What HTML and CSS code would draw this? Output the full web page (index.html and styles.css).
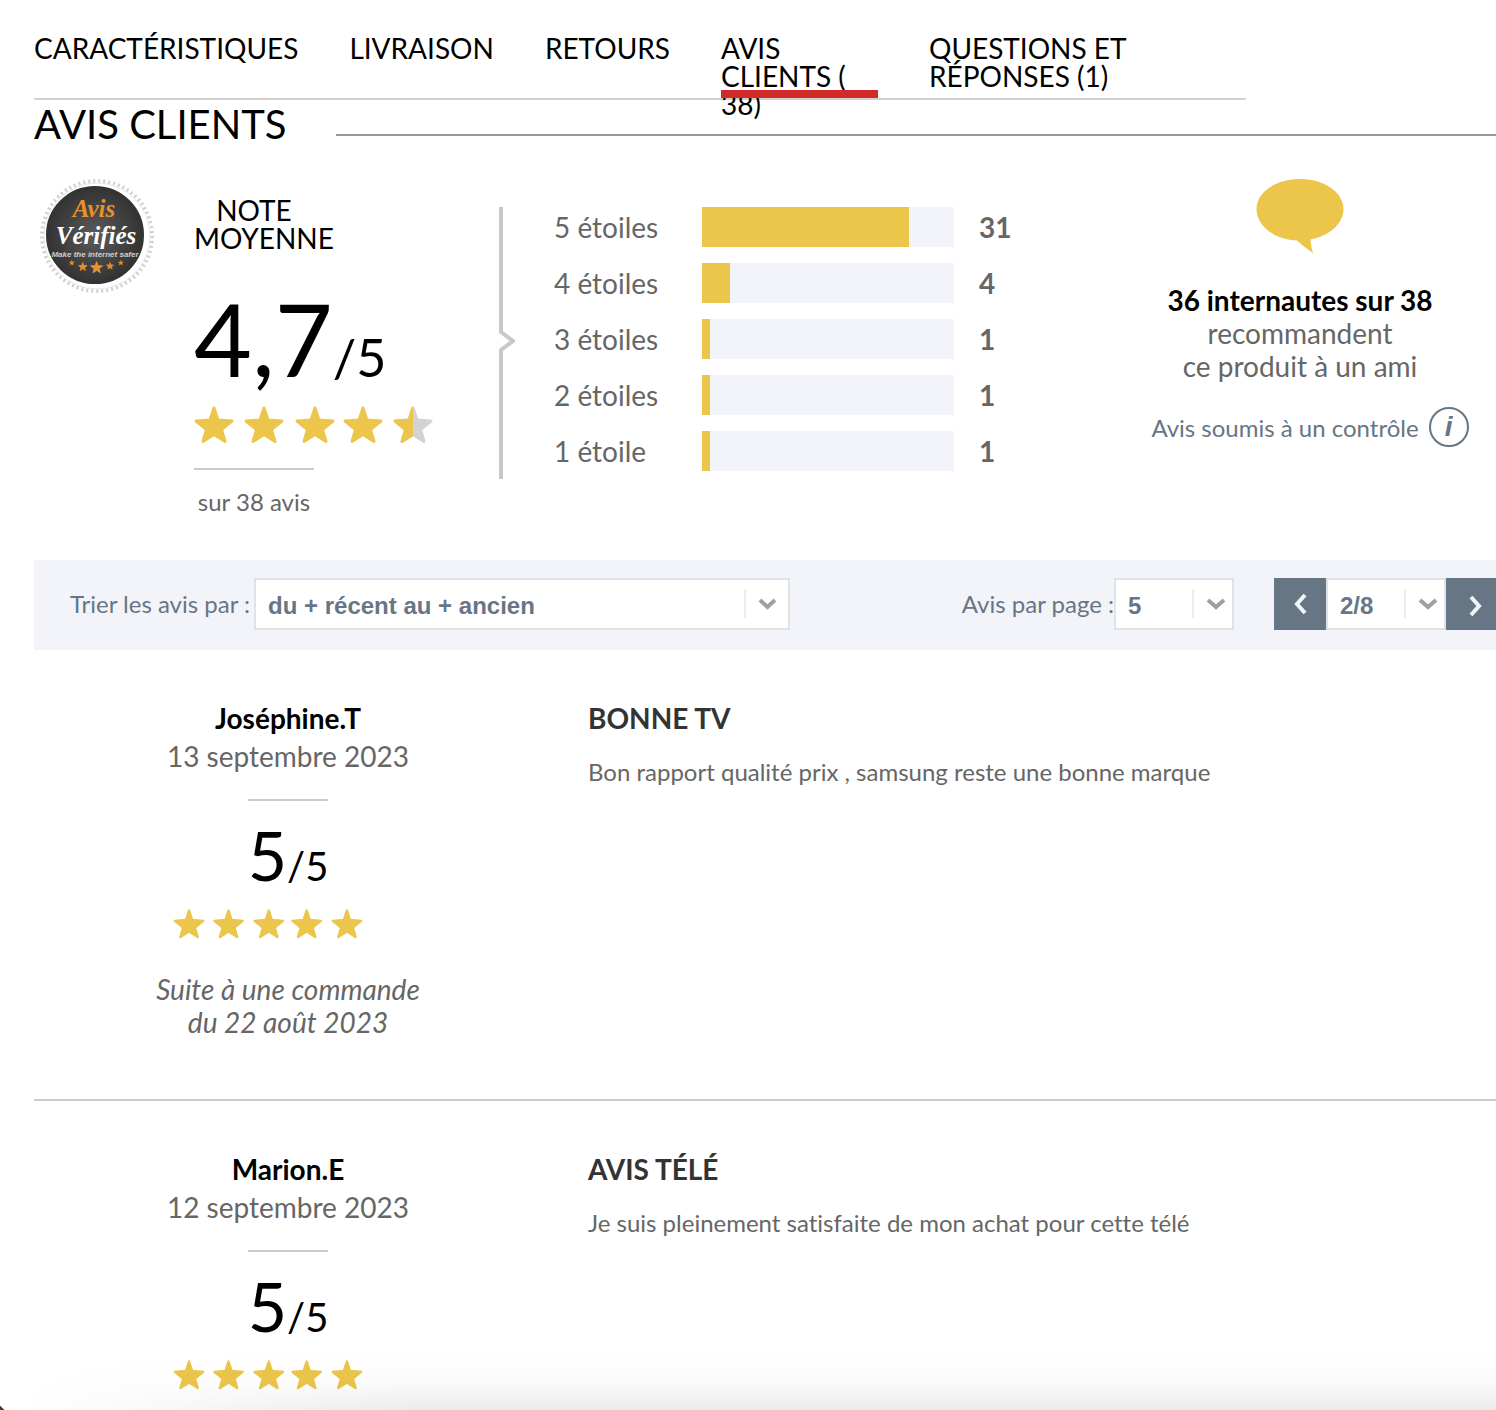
FILE: index.html
```html
<!DOCTYPE html>
<html lang="fr">
<head>
<meta charset="utf-8">
<meta name="viewport" content="width=device-width, initial-scale=1">
<title>Avis clients</title>
<link rel="stylesheet" href="styles.css">
</head>
<body>
<svg class="defs" width="0" height="0" aria-hidden="true">
  <defs>
    <path id="star" stroke-width="3" stroke-linejoin="round" d="M20 2 24 14 38 15 27.500 23.500 31 35.500 20 28.500 9 35.500 12.500 23.500 2 15 16 14Z"/>
    <clipPath id="left-half"><path d="M0 0H20V38H0Z"/></clipPath>
    <g id="five-stars">
      <use href="#star"/><use href="#star" x="50"/><use href="#star" x="101"/><use href="#star" x="149"/><use href="#star" x="200"/>
    </g>
  </defs>
</svg>
<nav class="tabs">
  <a href="#caracteristiques">CARACTÉRISTIQUES</a>
  <a href="#livraison">LIVRAISON</a>
  <a href="#retours">RETOURS</a>
  <a href="#avis" class="active">AVIS CLIENTS ( 38)</a>
  <a href="#questions" class="questions">QUESTIONS ET RÉPONSES (1)</a>
</nav>
<main id="avis">
  <h1 class="title">AVIS CLIENTS</h1>

  <section class="summary">
    <div class="seal">
      <svg width="114" height="116" viewBox="0 0 114 116" role="img" aria-label="Avis Vérifiés">
        <defs>
          <radialGradient id="disc"><stop offset="0" stop-color="#5b5b5b"/><stop offset="1" stop-color="#333"/></radialGradient>
        </defs>
        <circle cx="57" cy="58" r="55" fill="none" stroke="#d0d0d0" stroke-width="4" stroke-dasharray="2 3"/>
        <circle cx="57" cy="58" r="53" fill="#fff" stroke="#e8e8e8"/>
        <circle cx="55" cy="57" r="48" fill="url(#disc)" stroke="#333" stroke-width="2"/>
        <g text-anchor="middle" font-weight="bold" font-style="italic">
          <text class="seal-text" x="54" y="39" font-size="25" fill="#e8912c">Avis</text>
          <text class="seal-text" x="56" y="66" font-size="25" fill="#fff">Vérifiés</text>
          <text class="seal-note" x="55" y="79" font-size="8" fill="#d0d0d0">Make the internet safer</text>
        </g>
        <g fill="#e8912c" stroke="#e8912c">
          <use href="#star" transform="translate(29 82) scale(.14)"/>
          <use href="#star" transform="translate(38 84) scale(.24)"/>
          <use href="#star" transform="translate(50 83) scale(.33)"/>
          <use href="#star" transform="translate(66 84) scale(.2)"/>
          <use href="#star" transform="translate(78 82) scale(.14)"/>
        </g>
      </svg>
    </div>

    <div class="average">
      <h2>NOTE MOYENNE</h2>
      <p class="score">4,7<span>/5</span></p>
      <svg class="stars" width="240" height="38" viewBox="0 0 240 38" role="img" aria-label="4,7 étoiles sur 5">
        <g class="gold"><use href="#star"/><use href="#star" x="50"/><use href="#star" x="101"/><use href="#star" x="149"/></g>
        <g transform="translate(199 0)"><use href="#star" class="empty"/><g clip-path="url(#left-half)"><use href="#star" class="gold"/></g></g>
      </svg>
      <p class="total">sur 38 avis</p>
    </div>

    <div class="distribution">
      <svg class="bracket" width="16" height="272" viewBox="0 0 16 272" aria-hidden="true">
        <path d="M2 0V125L14 134 2 143V272" fill="none" stroke="#c8c8c8" stroke-width="4"/>
      </svg>
      <ul>
        <li><span>5 étoiles</span><div class="bar"><div style="width:82%"></div></div><b>31</b></li>
        <li><span>4 étoiles</span><div class="bar"><div style="width:11%"></div></div><b>4</b></li>
        <li><span>3 étoiles</span><div class="bar"><div style="width:3%"></div></div><b>1</b></li>
        <li><span>2 étoiles</span><div class="bar"><div style="width:3%"></div></div><b>1</b></li>
        <li><span>1 étoile</span><div class="bar"><div style="width:3%"></div></div><b>1</b></li>
      </ul>
    </div>

    <div class="recommend">
      <svg width="88" height="76" viewBox="0 0 88 76" aria-hidden="true">
        <path fill="#ecc64b" d="M44 1C68 1 87.500 14 87.500 31 87.500 46 73 58 54.500 61.500Q55 69 57 75Q49 70 41 62.500C18 62 .5 47 .5 31 .5 14 20 1 44 1Z"/>
      </svg>
      <p><strong>36 internautes sur 38</strong><br>recommandent<br>ce produit à un ami</p>
      <a href="#controle" class="control">Avis soumis à un contrôle <span class="info">i</span></a>
    </div>
  </section>

  <form class="toolbar">
    <label for="sort">Trier les avis par :</label>
    <div class="select sort">
      <select id="sort"><option>du + récent au + ancien</option></select>
      <svg width="44" height="48" viewBox="0 0 44 48" aria-hidden="true"><path class="sep" d="M1 9V38"/><path class="chev" d="M16 20 23.500 27 31 20"/></svg>
    </div>
    <label for="per-page" class="push">Avis par page :</label>
    <div class="select small">
      <select id="per-page"><option>5</option></select>
      <svg width="44" height="48" viewBox="0 0 44 48" aria-hidden="true"><path class="sep" d="M5 9V38"/><path class="chev" d="M20 20 28 27 36 20"/></svg>
    </div>
    <div class="pager">
      <button type="button" aria-label="Page précédente"><svg width="16" height="24" viewBox="0 0 16 24"><path d="M13 3 5 12 13 21"/></svg></button>
      <div class="select small">
        <select aria-label="Page"><option>2/8</option></select>
        <svg width="44" height="48" viewBox="0 0 44 48" aria-hidden="true"><path class="sep" d="M5 9V38"/><path class="chev" d="M20 20 28 27 36 20"/></svg>
      </div>
      <button type="button" class="next" aria-label="Page suivante"><svg width="16" height="24" viewBox="0 0 16 24"><path d="M4 5 12 14 4 23"/></svg></button>
    </div>
  </form>

  <article class="review">
    <div class="author">
      <strong>Joséphine.T</strong>
      <span class="date">13 septembre 2023</span>
      <p class="score">5<span>/5</span></p>
      <svg class="stars gold" width="192" height="30" viewBox="0 0 240 38" role="img" aria-label="5 étoiles sur 5"><use href="#five-stars"/></svg>
      <em>Suite à une commande<br>du 22 août 2023</em>
    </div>
    <div class="comment">
      <h3>BONNE TV</h3>
      <p>Bon rapport qualité prix , samsung reste une bonne marque</p>
    </div>
  </article>

  <article class="review">
    <div class="author">
      <strong>Marion.E</strong>
      <span class="date">12 septembre 2023</span>
      <p class="score">5<span>/5</span></p>
      <svg class="stars gold" width="192" height="30" viewBox="0 0 240 38" role="img" aria-label="5 étoiles sur 5"><use href="#five-stars"/></svg>
    </div>
    <div class="comment">
      <h3>AVIS TÉLÉ</h3>
      <p>Je suis pleinement satisfaite de mon achat pour cette télé</p>
    </div>
  </article>
</main>
<div class="shade"></div>
</body>
</html>
```
FILE: styles.css
```css
* { box-sizing: border-box; }

body {
  margin: 0;
  padding-left: 34px;
  background: #fff;
  color: #666;
  font: 28px/34px Lato, "Open Sans", sans-serif;
  font-variant-ligatures: none;
}

h1, h2, h3, p, ul { margin: 0; padding: 0; font-weight: 400; }
svg { display: block; }
a { color: inherit; text-decoration: none; }
.defs { position: absolute; }

/* Tabs */
.tabs {
  display: flex;
  gap: 51px;
  height: 100px;
  margin-right: 250px;
  padding-top: 34px;
  border-bottom: 2px solid #d0d0d0;
  color: #000;
  line-height: 28px;
  white-space: nowrap;
}
.tabs .active {
  position: relative;
  width: 157px;
  white-space: normal;
}
.tabs .active::after {
  content: "";
  position: absolute;
  inset: auto 0 0;
  height: 8px;
  background: #d12a28;
}
.tabs .questions { width: 220px; white-space: normal; }

.title {
  display: flex;
  align-items: center;
  gap: 50px;
  color: #000;
  font-size: 40px;
  line-height: 48px;
}
.title::after {
  content: "";
  flex: 1;
  height: 2px;
  margin-top: 22px;
  background: #999;
}

/* Summary */
.summary {
  display: grid;
  grid-template-columns: 160px 305px 605px 1fr;
  min-height: 412px;
  padding-top: 30px;
}
.seal { padding-left: 6px; }
.seal-text { font-family: "Liberation Serif", serif; }
.seal-note { font-family: "Liberation Sans", sans-serif; }

.average { padding-top: 18px; }
.average h2 {
  width: 120px;
  color: #000;
  font-size: 28px;
  line-height: 28px;
  text-align: center;
}
.score { color: #000; white-space: nowrap; }
.score span { line-height: 1; }
.average .score {
  margin-top: 36px;
  font-size: 100px;
  line-height: 100px;
}
.average .score span { font-size: 52px; }
.average .stars { margin-top: 18px; }
.gold { fill: #ecc64b; stroke: #ecc64b; }
.empty { fill: #d3d3d3; stroke: #d3d3d3; }
.total {
  width: 120px;
  margin-top: 24px;
  padding-top: 18px;
  border-top: 2px solid #ccc;
  font-size: 24px;
  line-height: 28px;
  text-align: center;
}

.distribution {
  display: flex;
  gap: 39px;
  padding-top: 29px;
}
.distribution ul {
  display: grid;
  gap: 16px;
  align-content: start;
  list-style: none;
}
.distribution li {
  display: grid;
  grid-template-columns: 148px 252px auto;
  align-items: center;
  height: 40px;
}
.bar { height: 40px; background: #f3f4f9; }
.bar div { height: 100%; background: #ecc64b; }
.distribution b { padding-left: 25px; }

.recommend { line-height: 33px; text-align: center; }
.recommend svg { margin: 0 auto 30px; }
.recommend strong { color: #000; }
.control {
  display: flex;
  align-items: center;
  justify-content: center;
  gap: 10px;
  margin-top: 24px;
  padding-left: 20px;
  color: #677685;
  font-size: 24px;
}
.info {
  width: 40px;
  height: 40px;
  border: 2px solid #677685;
  border-radius: 50%;
  font: italic bold 28px/36px "Liberation Sans", sans-serif;
}

/* Sorting and paging */
.toolbar {
  display: flex;
  align-items: center;
  height: 90px;
  padding: 0 0 2px 36px;
  background: #f3f4f9;
  color: #677685;
  font-size: 24px;
}
.select { position: relative; height: 52px; }
.select select {
  width: 100%;
  height: 100%;
  padding: 2px 12px 0;
  border: 2px solid #dfe3e8;
  border-radius: 0;
  appearance: none;
  background: #fff;
  color: #677685;
  font: bold 24px "Liberation Sans", sans-serif;
}
.select svg {
  position: absolute;
  top: 2px;
  right: 2px;
  fill: none;
  pointer-events: none;
}
.sep { stroke: #ececec; stroke-width: 2; }
.chev { stroke: #a0a0a0; stroke-width: 4; }
.sort { width: 536px; margin-left: 4px; }
.small { width: 120px; }
.push { margin-left: auto; }
.pager { display: flex; margin-left: 40px; }
.pager button {
  display: grid;
  place-items: center;
  width: 52px;
  height: 52px;
  padding: 0;
  border: 0;
  background: #677685;
}
.pager .next { width: 50px; padding-left: 8px; }
.pager button svg { fill: none; stroke: #eef6fa; stroke-width: 4; }

/* Reviews */
.review {
  display: grid;
  grid-template-columns: 508px 1fr;
  gap: 46px;
  padding: 49px 0 60px;
}
.review + .review {
  border-top: 2px solid #ccc;
  padding-bottom: 18px;
}
.author {
  display: flex;
  flex-direction: column;
  align-items: center;
  line-height: 38px;
  text-align: center;
}
.author strong { color: #000; }
.author .date::after {
  content: "";
  display: block;
  width: 80px;
  height: 2px;
  margin: 24px auto 20px;
  background: #ccc;
}
.author .score { font-size: 68px; line-height: 68px; }
.author .score span { font-size: 40px; }
.author .stars { margin: 20px 40px 0 0; }
.author em { margin-top: 34px; line-height: 33px; }
.comment h3 {
  color: #333;
  font-size: 28px;
  font-weight: 700;
  line-height: 38px;
}
.comment p { margin-top: 18px; font-size: 24px; }

/* Soft shade along the bottom edge of the window */
.shade {
  position: fixed;
  inset: auto 0 0;
  height: 56px;
  background: linear-gradient(transparent, rgb(0 0 0 / 2%) 50%, rgb(0 0 0 / 8%));
  mask-image: linear-gradient(to right, transparent 20px, #000 420px);
  pointer-events: none;
}
body::after {
  content: "";
  position: fixed;
  left: 0;
  bottom: 0;
  width: 5px;
  height: 4px;
  background: linear-gradient(to top right, #5a3a2c 50%, transparent 50%);
}
```
